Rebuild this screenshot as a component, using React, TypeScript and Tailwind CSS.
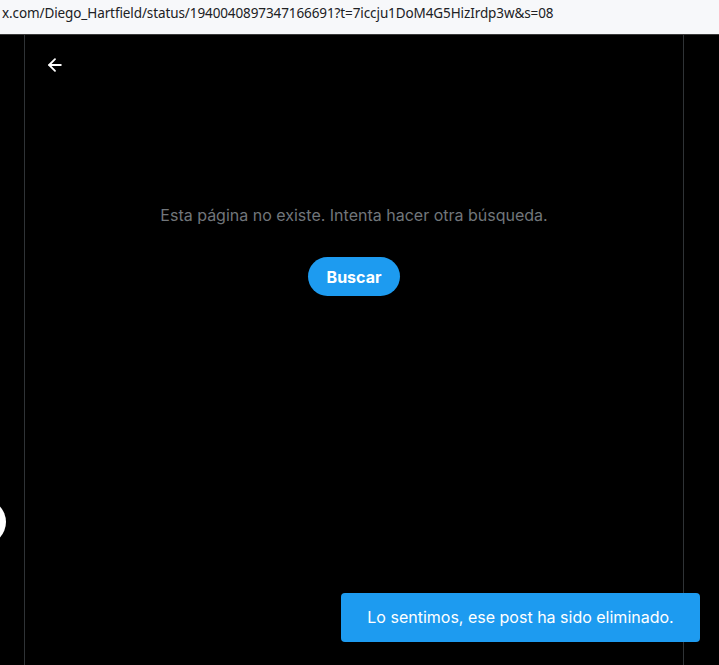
import { ArrowLeft } from 'lucide-react';

export default function App() {
  return (
    <div className="w-[719px] h-[665px] overflow-hidden bg-black flex flex-col font-['Inter',sans-serif]">
      {/* Browser address bar */}
      <div className="h-[35px] shrink-0 bg-[#f7f8fa] flex items-start pl-[2px] pt-[3px] border-b border-[#3a3a3a]">
        <span className="text-[13.5px] text-[#202124] font-['Noto_Sans',sans-serif] tracking-[-0.1px]">
          x.com/Diego_Hartfield/status/1940040897347166691?t=7iccju1DoM4G5HizIrdp3w&amp;s=08
        </span>
      </div>

      <div className="relative flex-1 flex">
        {/* Partial floating circle at left edge */}
        <div className="absolute left-[-40px] top-[464px] w-[46px] h-[46px] rounded-full bg-white" />

        <div className="ml-[24px] w-[660px] border-x border-[#2f3336] flex flex-col">
          <div className="h-[56px] flex items-center pl-[20px] pt-[4px]">
            <ArrowLeft className="w-[20px] h-[20px] text-white" strokeWidth={2.2} />
          </div>

          <div className="flex flex-col items-center pt-[114px]">
            <p className="text-[16px] text-[#71767b] leading-5">
              Esta página no existe. Intenta hacer otra búsqueda.
            </p>
            <button className="mt-[32px] h-[39px] px-[19px] rounded-full bg-[#1d9bf0] text-white text-[16px] font-bold">
              Buscar
            </button>
          </div>
        </div>

        {/* Toast */}
        <div className="absolute left-[341px] top-[558px] w-[359px] h-[49px] rounded-[4px] bg-[#1d9bf0] flex items-center justify-center pb-[2px]">
          <span className="text-white text-[16px]">Lo sentimos, ese post ha sido eliminado.</span>
        </div>
      </div>
    </div>
  );
}
